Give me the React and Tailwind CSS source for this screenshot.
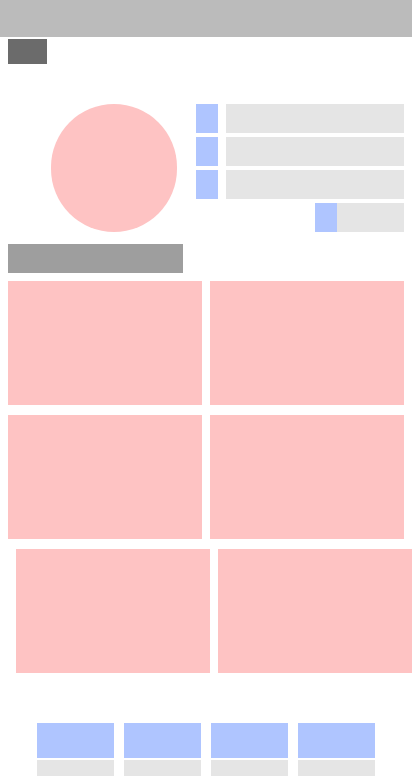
import React from 'react';

const Row = ({ children, className = '' }) => (
  <div className={`flex gap-2 ${className}`}>{children}</div>
);

const Card = () => <div className="h-[124px] flex-1 bg-[#fec3c3]" />;

export default function App() {
  const stats = [0, 1, 2];
  const tabs = [0, 1, 2, 3];

  return (
    <div className="w-[412px] min-h-[778px] bg-white overflow-hidden" style={{ fontFamily: 'Inter, sans-serif' }}>
      {/* top bar */}
      <div className="h-[37px] bg-[#bbbbbb]" />

      <div className="px-2">
        <div className="mt-[2px] w-[39px] h-[25px] bg-[#6b6b6b]" />

        {/* profile block */}
        <div className="mt-[40px] flex items-start">
          <div className="ml-[43px] w-[126px] h-[128px] rounded-full bg-[#fec3c3]" />
          <div className="ml-[19px] flex-1 flex flex-col gap-[4px]">
            {stats.map((i) => (
              <div key={i} className="flex gap-2 h-[29px]">
                <div className="w-[22px] bg-[#afc5ff]" />
                <div className="flex-1 bg-[#e5e5e5]" />
              </div>
            ))}
            <div className="flex justify-end h-[29px]">
              <div className="w-[22px] bg-[#afc5ff]" />
              <div className="w-[67px] bg-[#e5e5e5]" />
            </div>
          </div>
        </div>

        <div className="mt-[12px] w-[175px] h-[29px] bg-[#9e9e9e]" />

        {/* cards */}
        <div className="mt-[8px] flex flex-col gap-[10px]">
          <Row><Card /><Card /></Row>
          <Row><Card /><Card /></Row>
          <Row className="ml-2 -mr-2"><Card /><Card /></Row>
        </div>
      </div>

      {/* bottom nav */}
      <div className="mt-[50px] flex justify-center gap-[10px]">
        {tabs.map((i) => (
          <div key={i} className="w-[77px] flex flex-col gap-[2px]">
            <div className="h-[35px] bg-[#afc5ff]" />
            <div className="h-[16px] bg-[#e5e5e5]" />
          </div>
        ))}
      </div>
    </div>
  );
}
